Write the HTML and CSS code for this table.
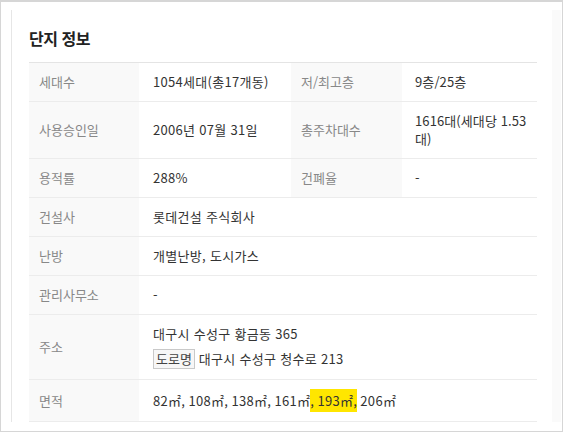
FILE: index.html
```html
<!DOCTYPE html>
<html lang="ko">
<head>
<meta charset="utf-8">
<link rel="stylesheet" href="styles.css">
</head>
<body>
<div class="frame">
  <div class="panel">
    <h2 class="title">단지 정보</h2>
    <table class="info">
      <colgroup>
        <col class="c1"><col class="c2"><col class="c3"><col class="c4">
      </colgroup>
      <tr>
        <th>세대수</th><td>1054세대(총17개동)</td>
        <th>저/최고층</th><td>9층/25층</td>
      </tr>
      <tr>
        <th>사용승인일</th><td>2006년 07월 31일</td>
        <th>총주차대수</th><td>1616대(세대당 1.53대)</td>
      </tr>
      <tr>
        <th>용적률</th><td>288%</td>
        <th>건폐율</th><td>-</td>
      </tr>
      <tr>
        <th>건설사</th><td colspan="3">롯데건설 주식회사</td>
      </tr>
      <tr>
        <th>난방</th><td colspan="3">개별난방, 도시가스</td>
      </tr>
      <tr>
        <th>관리사무소</th><td colspan="3">-</td>
      </tr>
      <tr>
        <th>주소</th>
        <td colspan="3">
          <div>대구시 수성구 황금동 365</div>
          <div class="road"><span class="tag">도로명</span> 대구시 수성구 청수로 213</div>
        </td>
      </tr>
      <tr class="last">
        <th>면적</th>
        <td colspan="3">82㎡, 108㎡, 138㎡, 161㎡<span class="hl">, 193㎡,</span> 206㎡</td>
      </tr>
    </table>
  </div>
</div>
</body>
</html>
```
FILE: styles.css
```css
html, body {
  margin: 0;
  padding: 0;
  background: #fff;
}
body {
  font-family: "Noto Sans CJK KR", "Noto Sans", sans-serif;
  color: #333;
}
.frame {
  box-sizing: border-box;
  width: 563px;
  height: 432px;
  border: 1px solid #d6d6d6;
  border-top-width: 2px;
  padding: 8px 1px 9px 10px;
}
.panel {
  box-sizing: border-box;
  height: 100%;
  border-left: 1px solid #e6e6e6;
  border-right: 9px solid #fafafa;
  padding: 0 0 0 17px;
}
.title {
  margin: 0;
  padding-top: 17px;
  height: 35px;
  font-size: 16px;
  line-height: 22px;
  font-weight: bold;
  color: #222;
  letter-spacing: -0.5px;
}
.info {
  width: 508px;
  border-collapse: collapse;
  table-layout: fixed;
  border-top: 1px solid #e4e4e4;
  font-size: 13px;
  line-height: 18px;
}
.c1 { width: 110px; }
.c2 { width: 152px; }
.c3 { width: 111px; }
.c4 { width: 135px; }
.info tr {
  border-bottom: 1px solid #ececec;
}
.info th {
  background: #f9f9f9;
  color: #888;
  font-weight: normal;
  text-align: left;
  padding: 10px 10px;
}
.info td {
  padding: 10px 8px 10px 14px;
  color: #333;
  vertical-align: middle;
  letter-spacing: 0.3px;
}
.info td:nth-child(4) {
  padding-left: 13px;
  padding-right: 4px;
  letter-spacing: 0.1px;
}
.info .last th,
.info .last td {
  padding-top: 12px;
  padding-bottom: 11px;
}
.road {
  margin-top: 6px;
}
.tag {
  display: inline-block;
  border: 1px solid #c9c9c9;
  background: #f7f7f7;
  padding: 0 2px;
  line-height: 18px;
  color: #444;
  letter-spacing: 0;
}
.hl {
  background: #ffe600;
  padding: 2px 0;
}
```
